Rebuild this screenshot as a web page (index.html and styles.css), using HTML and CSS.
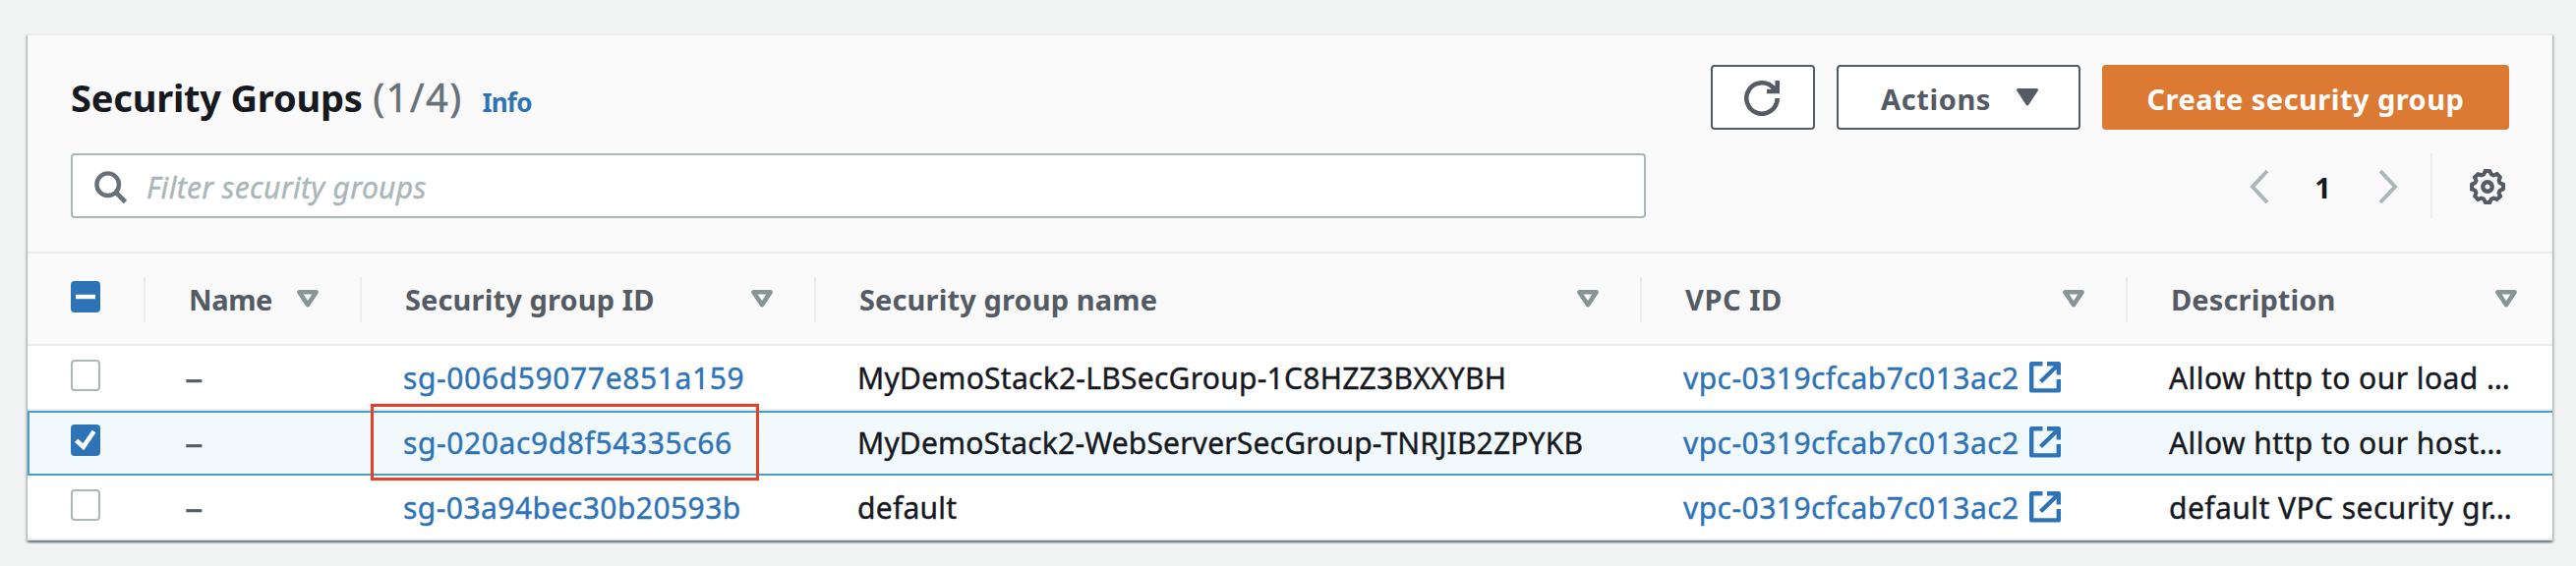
FILE: index.html
```
<!DOCTYPE html>
<html lang="en">
<head>
<meta charset="utf-8">
<title>Security Groups</title>
<link rel="stylesheet" href="styles.css">
</head>
<body>
<svg class="defs" width="0" height="0" aria-hidden="true">
  <defs>
    <symbol id="sort" viewBox="0 0 22 18"><path d="M2.4 2.3H19.6L11 15.2Z" fill="none" stroke="#879596" stroke-width="4.6" stroke-linejoin="round"/></symbol>
    <symbol id="external" viewBox="0 0 32 32"><path d="M13.5 2.2H2.2V29.4H29.8V18M18 2.2H29.8V13.5M11.5 20.5L29 3.5" fill="none" stroke="#2f73b7" stroke-width="4.4" stroke-linejoin="round"/></symbol>
    <path id="tooth" d="M16 -2.3L16 2.3L12.6 3.8L11.5 6.2L12.94 9.69"/>
  </defs>
</svg>
<main class="panel">
  <header class="panel-header">
    <div class="title-row">
      <h1 class="title">Security Groups <span class="count">(1/4)</span></h1>
      <a class="info">Info</a>
      <div class="actions">
        <button class="btn btn-icon" aria-label="Refresh">
          <svg width="36" height="36" viewBox="0 0 36 36"><path d="M33.7 18A15.7 15.7 0 1 1 30.5 8.5" fill="none" stroke="#545b64" stroke-width="4.6"/><path d="M33.8 0V11H23" fill="none" stroke="#545b64" stroke-width="4.6"/><path d="M27 6L34 12V5Z" fill="#545b64"/></svg>
        </button>
        <button class="btn btn-menu"><span>Actions</span>
          <svg class="caret" width="24" height="20" viewBox="0 0 24 20"><path d="M2.5 2.5H21.5L12 17Z" fill="#545b64" stroke="#545b64" stroke-width="3" stroke-linejoin="round"/></svg>
        </button>
        <button class="btn btn-primary">Create security group</button>
      </div>
    </div>
    <div class="tools-row">
      <div class="search">
        <svg width="34" height="34" viewBox="0 0 34 34"><circle cx="13.7" cy="13.7" r="11.3" fill="none" stroke="#687078" stroke-width="4.4"/><path d="M21.7 21.7L31.5 31.5" stroke="#687078" stroke-width="4.6"/></svg>
        <span class="placeholder">Filter security groups</span>
      </div>
      <div class="pager">
        <svg width="20" height="36" viewBox="0 0 20 36"><path d="M18 2L3 18L18 34" fill="none" stroke="#aab7b8" stroke-width="4"/></svg>
        <span class="page">1</span>
        <svg width="20" height="36" viewBox="0 0 20 36"><path d="M2 2L17 18L2 34" fill="none" stroke="#aab7b8" stroke-width="4"/></svg>
      </div>
      <div class="settings">
        <svg width="36" height="36" viewBox="-18 -18 36 36"><g fill="none" stroke="#545b64" stroke-width="4" stroke-linejoin="round" stroke-linecap="round"><use href="#tooth"/><use href="#tooth" transform="rotate(45)"/><use href="#tooth" transform="rotate(90)"/><use href="#tooth" transform="rotate(135)"/><use href="#tooth" transform="rotate(180)"/><use href="#tooth" transform="rotate(225)"/><use href="#tooth" transform="rotate(270)"/><use href="#tooth" transform="rotate(315)"/><circle r="4.7" stroke-width="4.4"/></g></svg>
      </div>
    </div>
  </header>

  <div class="row head">
    <div class="cell check"><span class="box on"><svg width="30" height="32" viewBox="0 0 30 32"><path d="M5 16H25" stroke="#fff" stroke-width="4.4"/></svg></span></div>
    <div class="cell"><span class="h-name">Name</span><svg class="sort"><use href="#sort"/></svg></div>
    <div class="cell"><span class="h-id">Security group ID</span><svg class="sort"><use href="#sort"/></svg></div>
    <div class="cell"><span class="h-group">Security group name</span><svg class="sort"><use href="#sort"/></svg></div>
    <div class="cell"><span class="h-vpc">VPC ID</span><svg class="sort"><use href="#sort"/></svg></div>
    <div class="cell"><span class="h-desc">Description</span><svg class="sort"><use href="#sort"/></svg></div>
  </div>

  <div class="row body">
    <div class="cell check"><span class="box"></span></div>
    <div class="cell dash">–</div>
    <div class="cell link id-a">sg-006d59077e851a159</div>
    <div class="cell name">MyDemoStack2-LBSecGroup-1C8HZZ3BXXYBH</div>
    <div class="cell link vpc">vpc-0319cfcab7c013ac2<svg class="external"><use href="#external"/></svg></div>
    <div class="cell">Allow http to our load …</div>
  </div>
  <div class="row body selected">
    <div class="cell check"><span class="box on"><svg width="30" height="32" viewBox="0 0 30 32"><path d="M5.6 16.2L12.8 22.8L23.6 7" fill="none" stroke="#fff" stroke-width="4.6"/></svg></span></div>
    <div class="cell dash">–</div>
    <div class="cell link id-b">sg-020ac9d8f54335c66<span class="marker"></span></div>
    <div class="cell name-b">MyDemoStack2-WebServerSecGroup-TNRJIB2ZPYKB</div>
    <div class="cell link vpc">vpc-0319cfcab7c013ac2<svg class="external"><use href="#external"/></svg></div>
    <div class="cell">Allow http to our host…</div>
  </div>
  <div class="row body">
    <div class="cell check"><span class="box"></span></div>
    <div class="cell dash">–</div>
    <div class="cell link">sg-03a94bec30b20593b</div>
    <div class="cell name">default</div>
    <div class="cell link vpc">vpc-0319cfcab7c013ac2<svg class="external"><use href="#external"/></svg></div>
    <div class="cell desc-c">default VPC security gr…</div>
  </div>
</main>
</body>
</html>
```
FILE: styles.css
```
* { box-sizing: border-box; }
body {
  margin: 0;
  height: 576px;
  overflow: hidden;
  padding: 34px 24px 0 28px;
  background: #f2f4f3;
  color: #16191f;
  font: 29px/1.3 "Noto Sans", "Open Sans", sans-serif;
}
svg { display: block; flex: none; }
.defs { position: absolute; }

.panel {
  width: 2568px;
  height: 516px;
  border-top: 2px solid #eaeded;
  background: #fff;
  box-shadow: 0 2px 2px rgba(0, 28, 36, .42), 2px 2px 2px rgba(0, 28, 36, .17), -2px 2px 2px rgba(0, 28, 36, .17);
}
.panel-header {
  height: 222px;
  padding: 30px 44px 0;
  background: #fafafa;
  border-bottom: 2px solid #eaeded;
}

.title-row { display: flex; align-items: baseline; height: 66px; }
.title { margin: 0; font-size: 38px; line-height: 66px; letter-spacing: -.2px; white-space: nowrap; }
.count { margin-left: 1px; font-size: 40px; line-height: 40px; font-weight: 400; color: #687078; letter-spacing: 1.3px; -webkit-text-stroke: .4px; }
.info { margin-left: 20px; font-size: 26px; font-weight: 700; color: #2f73b7; letter-spacing: -.8px; }
.actions { display: flex; gap: 22px; margin-left: auto; align-self: flex-start; }
.btn {
  display: flex;
  align-items: center;
  height: 66px;
  padding: 3px 0 0;
  border: 2px solid #545b64;
  border-radius: 4px;
  background: #fff;
  color: #545b64;
  font: 700 29px/60px "Noto Sans", "Open Sans", sans-serif;
  letter-spacing: .6px;
  white-space: nowrap;
}
.btn-icon { width: 106px; padding: 2px 0 0 32px; }
.btn-menu { width: 248px; padding-left: 43px; gap: 25px; }
.caret { margin-top: -3px; }
.btn-primary { width: 414px; padding-left: 43.5px; border-color: #dc7932; background: #dc7932; color: #fff; letter-spacing: .46px; }

.tools-row { display: flex; margin-top: 24px; height: 66px; }
.search {
  display: flex;
  align-items: center;
  width: 1602px;
  padding-left: 22px;
  border: 2px solid #aab7b8;
  border-radius: 4px;
  background: #fff;
}
.search svg { margin-top: 3px; }
.placeholder { margin: 3px 0 0 19px; color: #aab7b8; font-size: 30px; font-style: italic; letter-spacing: .3px; -webkit-text-stroke: .4px; }
.pager { display: flex; align-items: center; margin-left: 614px; padding-top: 2px; }
.page { width: 111px; padding-top: 2px; padding-right: 2px; text-align: center; font-weight: 700; }
.settings { display: flex; align-items: center; margin-left: auto; width: 80px; padding: 2px 0 0 38px; border-left: 2px solid #eaeded; }

.row {
  display: grid;
  grid-template-columns: 120px 220px 462px 840px 494px 432px;
  height: 66px;
  border-bottom: 2px solid #eaeded;
}
.cell {
  position: relative;
  display: flex;
  align-items: center;
  height: 66px;
  padding: 0 0 2px 42px;
  letter-spacing: .45px;
  white-space: nowrap;
}
.body { font-size: 30px; -webkit-text-stroke: .4px; }
.check { padding: 0 0 6px 44px; }
.box { width: 30px; height: 32px; border: 2px solid #aab7b8; border-radius: 4px; background: #fff; }
.box.on { border: 0; background: #2f73b7; }

.head { height: 94px; background: #fafafa; color: #545b64; font-weight: 700; }
.head .cell { height: 46px; margin-top: 24px; padding: 0 42px 0 44px; justify-content: space-between; border-right: 2px solid #eaeded; letter-spacing: .12px; }
.head .cell:last-child { padding-right: 36px; border-right: 0; }
.head .cell.check { padding: 0 0 6px 44px; }
.head .h-name { letter-spacing: -.4px; }
.head .h-vpc { letter-spacing: .54px; }
.sort { width: 22px; height: 18px; margin-top: -2px; }

.selected { border: 2px solid #479fc6; border-right: 0; background: #f2f9fd; }
.selected .cell { top: -2px; left: -2px; }
.dash { color: #545b64; font-size: 37px; line-height: 40px; padding: 0 0 4px 40px; }
.link { color: #2f73b7; }
.id-a { letter-spacing: .62px; }
.id-b { letter-spacing: .6px; }
.name { letter-spacing: .26px; }
.name-b { letter-spacing: .18px; }
.external { width: 32px; height: 32px; margin: 0 0 0 10px; }
.marker { position: absolute; left: 9px; top: -7px; width: 395px; height: 78px; border: 3px solid #e64126; }
```
